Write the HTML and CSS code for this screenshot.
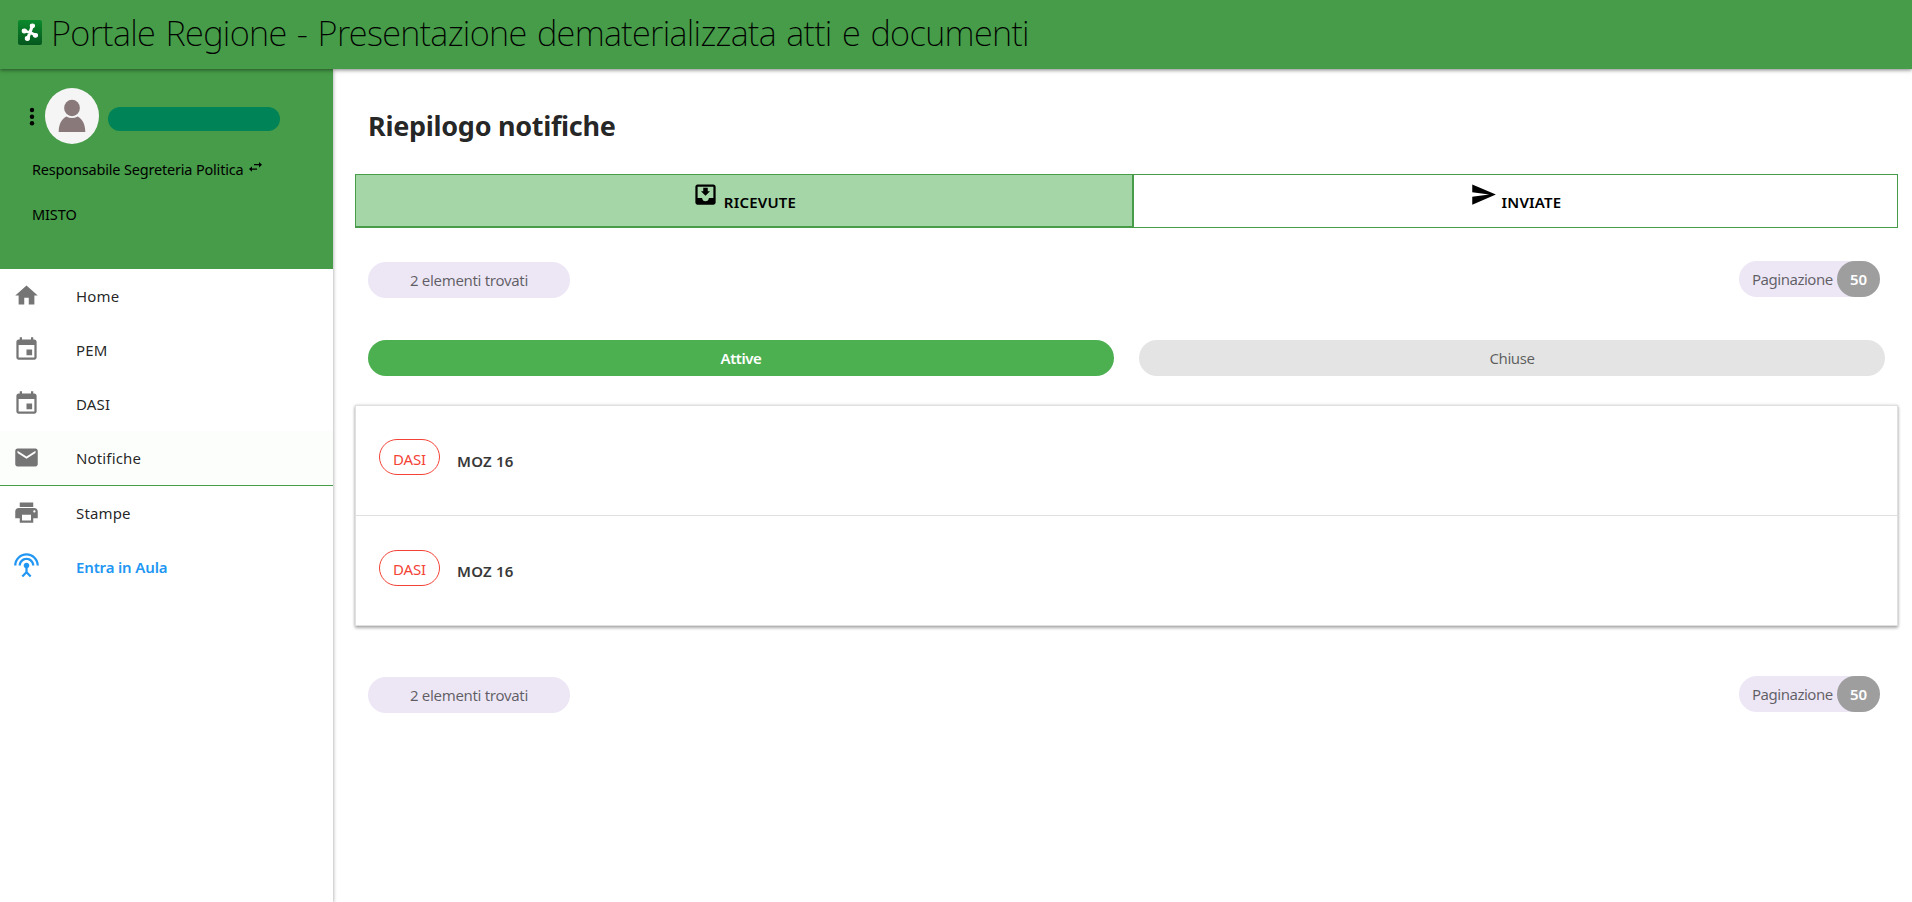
FILE: index.html
```html
<!DOCTYPE html>
<html lang="it">
<head>
<meta charset="utf-8">
<title>Portale Regione</title>
<link rel="stylesheet" href="styles.css">
</head>
<body>
<header class="topbar">
  <svg class="logo" viewBox="0 0 22 25" preserveAspectRatio="none"><defs><linearGradient id="lg" x1="0" y1="0" x2="0" y2="1"><stop offset="0" stop-color="#0b8a2c"/><stop offset="1" stop-color="#04571d"/></linearGradient></defs><rect width="22" height="25" rx="2" fill="url(#lg)"/><g stroke="#fff" stroke-linecap="round" fill="#fff"><path d="M13 6L11 12.500M16 15L11 12.500M9 18L11 12.500M6 11L11 12.500" stroke-width="2.800"/><circle cx="13.200" cy="5.800" r="1.900"/><circle cx="16" cy="15.300" r="1.900"/><circle cx="8.600" cy="18.500" r="1.900"/><circle cx="5.800" cy="11" r="1.900"/></g></svg>
  <span class="title">Portale Regione - Presentazione dematerializzata atti e documenti</span>
</header>
<div class="layout">
<aside class="sidebar">
  <section class="user">
    <div class="user-row">
      <svg class="dots" viewBox="0 0 6 20"><circle cx="3" cy="3" r="2.200"/><circle cx="3" cy="9.700" r="2.200"/><circle cx="3" cy="16.300" r="2.200"/></svg>
      <svg class="avatar" viewBox="0 0 54 56"><ellipse cx="27" cy="28" rx="27" ry="28" fill="#f5f5f5"/><ellipse cx="27" cy="20" rx="7.900" ry="8.200" fill="#89797b"/><path d="M13.700 44C13.700 36 17 30.500 21.300 28.500Q27 31.500 32.700 28.500C37 30.500 40.300 36 40.300 44Z" fill="#89797b"/></svg>
      <div class="name-pill"></div>
    </div>
    <div class="role"><span>Responsabile Segreteria Politica</span><svg class="swap" viewBox="0 0 13 10"><path d="M5 2.100H10V0L13 2.700 10 5.400V3.300H5ZM8 6.500V7.700H3V9.800L0 7.100 3 4.400V6.500Z"/></svg></div>
    <div class="group"><span>MISTO</span></div>
  </section>
  <nav class="nav">
    <a class="item"><svg class="ico" viewBox="0 0 24 24"><path d="M10 20v-6h4v6h5v-8h3L12 3 2 12h3v8z"/></svg><span>Home</span></a>
    <a class="item"><svg class="ico" viewBox="0 0 24 24"><path d="M17 12h-5v5h5v-5zM16 1v2H8V1H6v2H5c-1.110 0-1.990.9-1.990 2L3 19c0 1.100.89 2 2 2h14c1.100 0 2-.9 2-2V5c0-1.100-.9-2-2-2h-1V1h-2zm3 18H5V8h14v11z"/></svg><span>PEM</span></a>
    <a class="item"><svg class="ico" viewBox="0 0 24 24"><path d="M17 12h-5v5h5v-5zM16 1v2H8V1H6v2H5c-1.110 0-1.990.9-1.990 2L3 19c0 1.100.89 2 2 2h14c1.100 0 2-.9 2-2V5c0-1.100-.9-2-2-2h-1V1h-2zm3 18H5V8h14v11z"/></svg><span>DASI</span></a>
    <a class="item active"><svg class="ico" viewBox="0 0 24 24"><path d="M20 4H4c-1.100 0-1.990.9-1.990 2L2 18c0 1.100.9 2 2 2h16c1.100 0 2-.9 2-2V6c0-1.100-.9-2-2-2zm0 4l-8 5-8-5V6l8 5 8-5v2z"/></svg><span>Notifiche</span></a>
    <a class="item"><svg class="ico" viewBox="0 0 24 24"><path d="M19 8H5c-1.660 0-3 1.340-3 3v6h4v4h12v-4h4v-6c0-1.660-1.340-3-3-3zm-3 11H8v-5h8v5zm3-7c-.55 0-1-.45-1-1s.45-1 1-1 1 .45 1 1-.45 1-1 1zm-1-9H6v4h12V3z"/></svg><span>Stampe</span></a>
    <a class="item live"><svg class="ico" viewBox="0 0 24 24"><path d="M12 5c-3.870 0-7 3.130-7 7h2c0-2.760 2.240-5 5-5s5 2.240 5 5h2c0-3.870-3.130-7-7-7zm1 9.290c.88-.39 1.500-1.260 1.500-2.290 0-1.380-1.120-2.500-2.500-2.500S9.500 10.620 9.500 12c0 1.020.62 1.900 1.500 2.290v3.300L7.590 21 9 22.410l3-3 3 3L16.410 21 13 17.590v-3.300zM12 1C5.930 1 1 5.930 1 12h2c0-4.970 4.030-9 9-9s9 4.030 9 9h2c0-6.070-4.930-11-11-11z"/></svg><span>Entra in Aula</span></a>
  </nav>
</aside>
<main class="main">
  <h1 class="heading">Riepilogo notifiche</h1>
  <div class="tabs">
    <a class="tab selected"><svg class="tab-ico" viewBox="0 0 24 24"><path d="M16 9h-2V6h-4v3H8l4 4 4-4zm3-6H4.990C3.880 3 3 3.900 3 5v14c0 1.100.88 2 1.990 2H19c1.100 0 2-.9 2-2V5c0-1.100-.9-2-2-2zm0 12h-4c0 1.660-1.350 3-3 3s-3-1.340-3-3H4.990V5H19v10z"/></svg><span>RICEVUTE</span></a>
    <a class="tab"><svg class="tab-ico" viewBox="0 0 24 24"><path d="M2.010 21L23 12 2.010 3 2 10l15 2-15 2z"/></svg><span>INVIATE</span></a>
  </div>
  <div class="summary"><div class="chip count"><span>2 elementi trovati</span></div><div class="chip pager"><span>Paginazione</span><b class="size">50</b></div></div>
  <div class="filters"><a class="filter on">Attive</a><a class="filter">Chiuse</a></div>
  <div class="list">
    <div class="row"><div class="badge">DASI</div><div class="act">MOZ 16</div></div>
    <div class="row"><div class="badge">DASI</div><div class="act">MOZ 16</div></div>
  </div>
  <div class="summary bottom"><div class="chip count"><span>2 elementi trovati</span></div><div class="chip pager"><span>Paginazione</span><b class="size">50</b></div></div>
</main>
</div>
</body>
</html>
```
FILE: styles.css
```css
* { box-sizing: border-box; }
body { margin: 0; background: #fff; color: rgba(0,0,0,.87); font: 15px/20px "Noto Sans", "Open Sans", sans-serif; }
svg { display: block; flex: none; }
.topbar { position: relative; z-index: 2; display: flex; height: 69px; padding: 0 18px; background: #469c48; color: #000; box-shadow: 0 1px 4px rgba(0,0,0,.5); }
.logo { width: 24px; height: 25px; margin: 20px 9px 0 0; }
.title { font: 200 34.500px/65px "Noto Sans", sans-serif; letter-spacing: -.67px; word-spacing: 2px; white-space: nowrap; }
.layout { display: flex; height: 833px; }
.sidebar { width: 333px; flex: none; box-shadow: 0 1px 4px rgba(0,0,0,.4); }
.user { height: 200px; padding: 19px 0 0 29px; background: #469c48; color: #000; font-size: 14.500px; }
.user-row { display: flex; height: 56px; }
.dots { width: 6px; height: 20px; margin: 19px 10px 0 0; }
.avatar { width: 54px; height: 56px; }
.name-pill { width: 172px; height: 24px; margin: 19px 0 0 9px; border-radius: 12px; background: #008357; }
.role { display: flex; margin: 15px 0 0 3px; letter-spacing: -.18px; }
.swap { width: 13px; height: 10px; margin: 3px 0 0 5px; }
.group { margin: 25px 0 0 3px; letter-spacing: -.1px; }
.item { display: flex; align-items: center; height: 54px; padding-left: 13px; letter-spacing: .15px; }
.item span { padding-left: 36px; }
.ico { width: 27px; height: 27px; margin-bottom: 2px; fill: #757575; }
.item.active { height: 55px; border-bottom: 1px solid #469c48; background: #fcfefc; }
.item.live { color: #2196f3; font-weight: 600; letter-spacing: -.15px; }
.live .ico { margin-bottom: 4px; fill: #2196f3; }
.main { flex: 1; padding: 0 14px 0 22px; }
.heading { margin: 38px 0 0 13px; font-size: 27px; line-height: 38px; font-weight: 700; letter-spacing: -.3px; }
.tabs { display: flex; height: 54px; margin-top: 29px; border: 1px solid #469c48; }
.tab { display: flex; justify-content: center; flex: 1; padding-top: 6px; color: #000; font-weight: 600; line-height: 43px; letter-spacing: .2px; }
.tab.selected { flex: none; width: 778px; border: solid #469c48; border-width: 0 2px 1px 0; background: #a5d6a7; }
.tab-ico { width: 27px; height: 27px; margin-right: 5px; }
.summary { display: flex; justify-content: space-between; margin: 33px 18px 0 13px; }
.chip { display: flex; height: 36px; border-radius: 18px; background: #ece6f5; color: rgba(0,0,0,.6); line-height: 36px; letter-spacing: -.31px; }
.count { width: 202px; justify-content: center; margin-top: 1px; }
.pager { padding-left: 13px; width: 141px; justify-content: space-between; letter-spacing: -.48px; }
.size { width: 43px; flex: none; border-radius: 18px; background: #9e9e9e; color: #fff; text-align: center; font-weight: 600; letter-spacing: -.2px; }
.filters { display: flex; gap: 25px; margin: 42px 13px 0; }
.filter { flex: 1; height: 36px; border-radius: 18px; background: #e4e4e4; color: rgba(0,0,0,.6); line-height: 36px; text-align: center; letter-spacing: -.45px; }
.filter.on { background: #4caf50; color: #fff; font-weight: 600; }
.list { margin-top: 29px; border: 1px solid #e0e0e0; box-shadow: 0 2px 3px rgba(0,0,0,.3), 0 0 3px rgba(0,0,0,.15); }
.row { display: flex; height: 109px; padding: 33px 0 0 23px; }
.row + .row { height: 110px; padding-top: 34px; border-top: 1px solid #e0e0e0; }
.badge { width: 61px; height: 36px; border: 1px solid #f44336; border-radius: 18px; color: #f44336; text-align: center; line-height: 38px; letter-spacing: -.2px; }
.act { margin-left: 17px; color: #383838; font-weight: 600; line-height: 44px; letter-spacing: .2px; }
.row + .row .badge { line-height: 36px; }
.row + .row .act { line-height: 42px; }
.bottom { margin-top: 50px; }
```
